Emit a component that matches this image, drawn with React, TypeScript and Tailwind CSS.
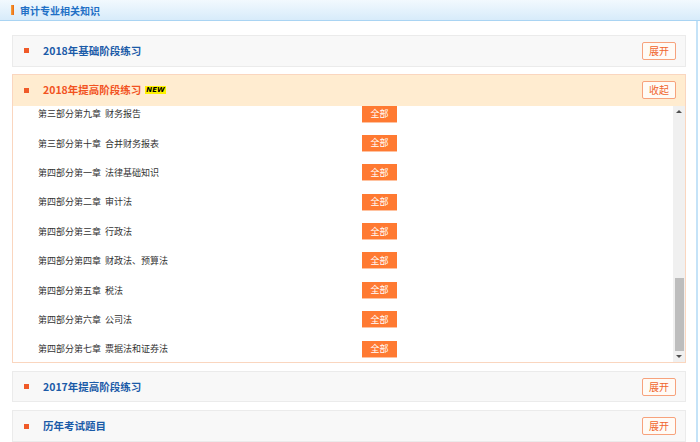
import React, { useLayoutEffect, useRef } from "react";

const rows = [
  "第一部分第一章 宏观经济学基础",
  "第一部分第二章 财政政策",
  "第一部分第三章 货币政策",
  "第一部分第四章 国际经济",
  "第二部分第一章 财务管理基础",
  "第二部分第二章 筹资管理",
  "第二部分第三章 投资管理",
  "第二部分第四章 营运资本管理",
  "第二部分第五章 利润分配管理",
  "第二部分第六章 财务分析",
  "第三部分第一章 会计基础",
  "第三部分第二章 流动资产",
  "第三部分第三章 非流动资产",
  "第三部分第四章 流动负债",
  "第三部分第五章 非流动负债",
  "第三部分第六章 所有者权益",
  "第三部分第七章 收入、费用和利润",
  "第三部分第八章 会计调整",
  "第三部分第九章 财务报告",
  "第三部分第十章 合并财务报表",
  "第四部分第一章 法律基础知识",
  "第四部分第二章 审计法",
  "第四部分第三章 行政法",
  "第四部分第四章 财政法、预算法",
  "第四部分第五章 税法",
  "第四部分第六章 公司法",
  "第四部分第七章 票据法和证券法",
];

const font = { fontFamily: '"Noto Sans CJK SC", "Noto Sans", sans-serif' };

function ToggleBtn({ label }: { label: string }) {
  return (
    <div className="mr-[9px] flex h-[18px] w-[34px] items-center justify-center rounded-[2px] border border-[#f7a27c] bg-[#fffbf6] text-[10px] leading-none text-[#f0652d]">
      {label}
    </div>
  );
}

function CollapsedSection({ title, className = "" }: { title: string; className?: string }) {
  return (
    <div className={`flex h-[32px] items-center border border-[#ebebeb] bg-[#f8f8f8] ${className}`}>
      <div className="ml-[11px] h-[5px] w-[5px] bg-[#f05a28]" />
      <div className="ml-[14px] flex-1 text-[10.5px] font-bold text-[#1b5ba8]">{title}</div>
      <ToggleBtn label="展开" />
    </div>
  );
}

export default function App() {
  const listRef = useRef<HTMLDivElement>(null);
  useLayoutEffect(() => {
    const el = listRef.current;
    if (el) el.scrollTop = el.scrollHeight - el.clientHeight - 2;
  }, []);

  return (
    <div className="h-[442px] w-[700px] overflow-hidden bg-white" style={font}>
      <div className="flex h-[21px] items-center border-b border-[#a9d4f3] bg-gradient-to-b from-[#f2f9fe] to-[#d7ebfa]">
        <div className="ml-[11px] h-[10px] w-[3px] bg-gradient-to-r from-[#f7a23a] to-[#e8680f]" />
        <div className="ml-[6px] text-[10px] font-bold text-[#1f70c6]">审计专业相关知识</div>
      </div>
      <div className="flex h-[421px] w-[698px] flex-col border-r-2 border-[#c5e3f8] pl-[12px] pr-[10px] pt-[14px]">
        <CollapsedSection title="2018年基础阶段练习" />

        <div className="mt-[7px] flex flex-col border border-[#fad6bf]">
          <div className="flex h-[31px] items-center bg-[#ffecd0]">
            <div className="ml-[11px] h-[5px] w-[5px] bg-[#f05a28]" />
            <div className="ml-[14px] text-[10.5px] font-bold text-[#f2531f]">2018年提高阶段练习</div>
            <span
              className="ml-[4px] bg-[#fff200] px-[1px] text-[7px] font-extrabold italic leading-[8px] text-black"
              style={{ fontFamily: '"DejaVu Sans", sans-serif' }}
            >
              NEW
            </span>
            <div className="flex-1" />
            <ToggleBtn label="收起" />
          </div>
          <div className="flex h-[256px]">
            <div ref={listRef} className="flex-1 overflow-hidden bg-white">
              {rows.map((r) => {
                const [chapter, name] = r.split(" ");
                return (
                  <div key={r} className="flex h-[29.375px] items-center pl-[25px]">
                    <div className="flex w-[324px] text-[9px] text-[#333333]">
                      <span>{chapter}</span>
                      <span className="ml-[4px]">{name}</span>
                    </div>
                    <div className="flex h-[17px] w-[35px] items-center justify-center border-b border-[#ffc2a0] bg-[#ff7a32] text-[9px] leading-none text-white">
                      全部
                    </div>
                  </div>
                );
              })}
            </div>
            <div className="flex w-[12px] flex-col bg-[#f0f0f0]">
              <div className="flex h-[12px] items-center justify-center">
                <div className="h-0 w-0 border-x-[3px] border-b-[3px] border-x-transparent border-b-[#505050]" />
              </div>
              <div className="flex-1" />
              <div className="ml-[2px] mr-[1px] h-[73px] bg-[#bdbdbd]" />
              <div className="flex h-[11px] items-center justify-center">
                <div className="h-0 w-0 border-x-[3px] border-t-[3px] border-x-transparent border-t-[#505050]" />
              </div>
            </div>
          </div>
        </div>

        <CollapsedSection title="2017年提高阶段练习" className="mt-[8px]" />
        <CollapsedSection title="历年考试题目" className="mt-[8px]" />
      </div>
    </div>
  );
}
